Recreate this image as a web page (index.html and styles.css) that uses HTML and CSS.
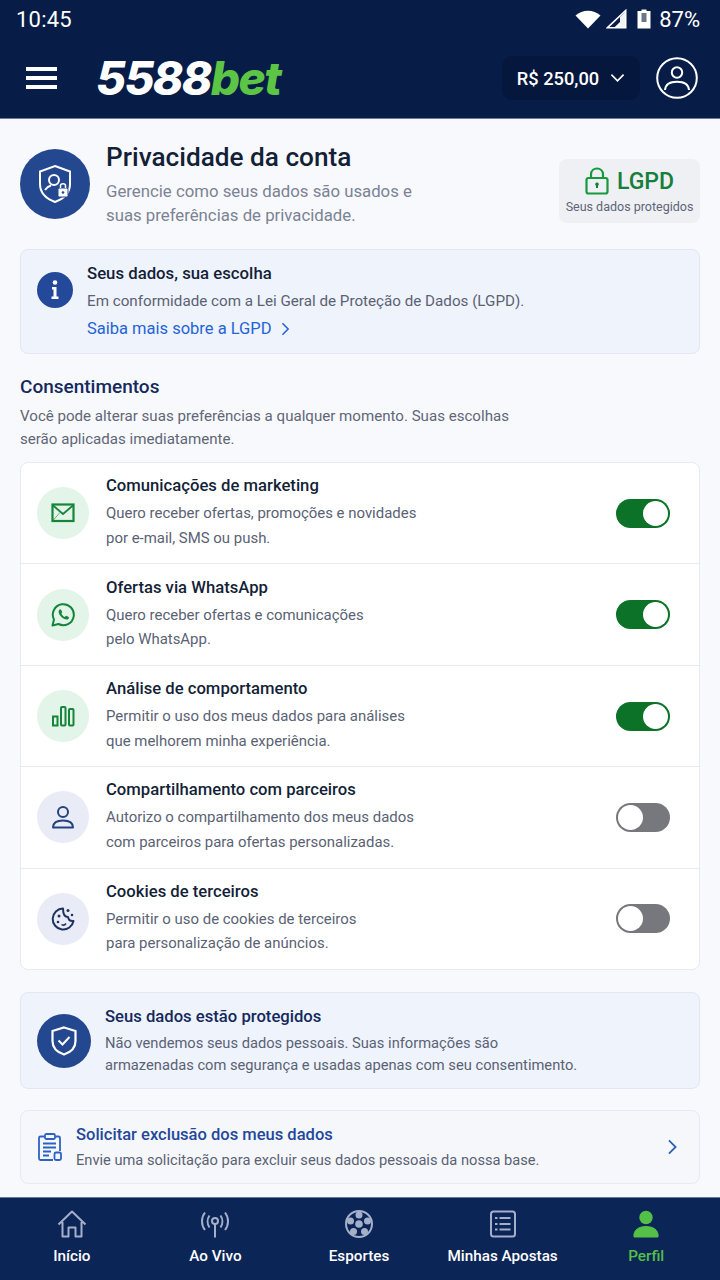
FILE: index.html
```html
<!DOCTYPE html>
<html lang="pt-BR">
<head>
<meta charset="utf-8">
<title>Privacidade da conta</title>
<link rel="stylesheet" href="styles.css">
</head>
<body>
<div class="app">
  <header class="topbar">
    <div class="status">
      <span class="time">10:45</span>
      <div class="status-right">
        <svg class="s-wifi" viewBox="0 0 26 20" width="26" height="20"><path d="M0.5 6.5C7.5 0.2 18.5 0.2 25.5 6.5L13 19.5Z" fill="#fff"/></svg>
        <svg class="s-signal" viewBox="0 0 21 20" width="21" height="20"><path d="M1.5 18.7L19.7 1.5V18.7Z" fill="none" stroke="#fff" stroke-width="1.6"/><path d="M8 18.7L14 13V18.7Z" fill="#fff"/><path d="M14 8V18.7H19.7V2.5Z" fill="#fff" opacity=".95"/></svg>
        <svg class="s-batt" viewBox="0 0 14 20" width="14" height="20"><path d="M4.5 0.5H9.5V2H13.5V19.5H0.5V2H4.5Z" fill="#fff"/><rect x="4.5" y="4" width="5" height="9" fill="#6d7689"/></svg>
        <span class="pct">87%</span>
      </div>
    </div>
    <div class="navrow">
      <div class="burger"><i></i><i></i><i></i></div>
      <div class="logo">5588<em>bet</em></div>
      <div class="balance">R$ 250,00
        <svg viewBox="0 0 16 10" width="15" height="10"><path d="M1.5 1.5L8 8L14.5 1.5" fill="none" stroke="#fff" stroke-width="1.8"/></svg>
      </div>
      <svg class="avatar" viewBox="0 0 42 42" width="42" height="42"><circle cx="21" cy="21" r="19.8" fill="none" stroke="#fff" stroke-width="2"/><circle cx="21" cy="15.5" r="5.2" fill="none" stroke="#fff" stroke-width="2"/><path d="M9 33C9.5 27 14 24.8 21 24.8S32.5 27 33 33" fill="none" stroke="#fff" stroke-width="2"/></svg>
    </div>
  </header>

  <main class="content">
    <section class="hero">
      <div class="hero-icon">
        <svg viewBox="0 0 36 40" width="36" height="40"><path d="M18 2L33 7.5V20C33 29 26 35 18 38C10 35 3 29 3 20V7.5Z" fill="none" stroke="#fff" stroke-width="2"/><circle cx="17" cy="16" r="5" fill="none" stroke="#fff" stroke-width="2"/><path d="M8 26C10 23 12 22 14 21.5" fill="none" stroke="#fff" stroke-width="2"/><rect x="21" y="24" width="10" height="9" rx="1.5" fill="#fff" stroke="#24488f" stroke-width="1"/><path d="M23.5 24V21.5C23.5 19 28.500 19 28.500 21.500V24" fill="none" stroke="#fff" stroke-width="1.500"/><circle cx="26" cy="28.500" r="1.300" fill="#24488f"/></svg>
      </div>
      <div class="hero-text">
        <h1>Privacidade da conta</h1>
        <p>Gerencie como seus dados são usados e<br>suas preferências de privacidade.</p>
      </div>
      <div class="lgpd">
        <div class="lgpd-top">
          <svg viewBox="0 0 24 28" width="24" height="28"><rect x="1.500" y="11" width="21" height="15.500" rx="2" fill="none" stroke="#16993f" stroke-width="2.200"/><path d="M6 11V7.500C6 -0.500 18 -0.500 18 7.500V11" fill="none" stroke="#16993f" stroke-width="2.200"/><path d="M12 15.500a1.800 1.800 0 0 1 1 3.300V21H11V18.800A1.800 1.800 0 0 1 12 15.500Z" fill="#16803a"/></svg>
          <span>LGPD</span>
        </div>
        <small>Seus dados protegidos</small>
      </div>
    </section>

    <section class="info">
      <div class="info-icon"><svg viewBox="0 0 36 36" width="36" height="36"><circle cx="18" cy="18" r="18" fill="#24499b"/><circle cx="18" cy="10.500" r="2.300" fill="#fff"/><path d="M15 15H19.500V24.500H21.500V27H14.500V24.500H16.500V17.500H15Z" fill="#fff"/></svg></div>
      <div>
        <h3>Seus dados, sua escolha</h3>
        <p>Em conformidade com a Lei Geral de Proteção de Dados (LGPD).</p>
        <a class="link">Saiba mais sobre a LGPD
          <svg viewBox="0 0 10 16" width="9" height="14"><path d="M1.500 1.500L8 8L1.500 14.500" fill="none" stroke="#2563d6" stroke-width="1.800"/></svg>
        </a>
      </div>
    </section>

    <section class="consents-head">
      <h2>Consentimentos</h2>
      <p>Você pode alterar suas preferências a qualquer momento. Suas escolhas<br>serão aplicadas imediatamente.</p>
    </section>

    <section class="list">
      <div class="row">
        <div class="ic green"><svg viewBox="0 0 24 20" width="24" height="20"><rect x="1.500" y="1.500" width="21" height="16.500" fill="none" stroke="#14853a" stroke-width="2.200"/><path d="M1.500 2L12 11L22.500 2" fill="none" stroke="#14853a" stroke-width="1.800"/><path d="M1.500 18L9 9.500" fill="none" stroke="#14853a" stroke-width="1" opacity=".6"/></svg></div>
        <div class="txt"><h4>Comunicações de marketing</h4><p>Quero receber ofertas, promoções e novidades<br>por e-mail, SMS ou push.</p></div>
        <div class="tog on"><b></b></div>
      </div>
      <div class="row">
        <div class="ic green"><svg viewBox="0 0 24 24" width="24" height="24"><path d="M1.500 22.500L3 16.500A10.500 10.500 0 1 1 7.500 21Z" fill="none" stroke="#14853a" stroke-width="2" stroke-linejoin="round"/><path d="M8.500 6.500C7 8 7.500 10.500 9.500 13C11.500 15.500 14.500 17 16.500 16.500C17.800 16 18 15 17.800 14L15 12.700L13.800 14C12.500 13.500 11 12 10.300 10.500L11.300 9.300L10 6.500Z" fill="#14853a"/></svg></div>
        <div class="txt"><h4>Ofertas via WhatsApp</h4><p>Quero receber ofertas e comunicações<br>pelo WhatsApp.</p></div>
        <div class="tog on"><b></b></div>
      </div>
      <div class="row">
        <div class="ic green"><svg viewBox="0 0 24 22" width="24" height="22"><rect x="2" y="11.500" width="4.500" height="9" fill="none" stroke="#14853a" stroke-width="2"/><rect x="10" y="2" width="4.500" height="18.500" rx="1" fill="none" stroke="#14853a" stroke-width="2"/><rect x="18" y="4" width="4.500" height="16.500" rx="1" fill="none" stroke="#14853a" stroke-width="2"/></svg></div>
        <div class="txt"><h4>Análise de comportamento</h4><p>Permitir o uso dos meus dados para análises<br>que melhorem minha experiência.</p></div>
        <div class="tog on"><b></b></div>
      </div>
      <div class="row">
        <div class="ic blue"><svg viewBox="0 0 24 24" width="24" height="24"><circle cx="12" cy="7" r="5" fill="none" stroke="#24427f" stroke-width="2"/><path d="M2 22.500C2 17.500 6 15.500 12 15.500S22 17.500 22 22.500Z" fill="none" stroke="#24427f" stroke-width="2" stroke-linejoin="round"/></svg></div>
        <div class="txt"><h4>Compartilhamento com parceiros</h4><p>Autorizo o compartilhamento dos meus dados<br>com parceiros para ofertas personalizadas.</p></div>
        <div class="tog"><b></b></div>
      </div>
      <div class="row">
        <div class="ic blue"><svg viewBox="0 0 24 24" width="24" height="24"><path d="M12 1.500A10.500 10.500 0 1 0 22.500 14C19.500 14.500 17.500 12.500 17 10C14 10 12 7.500 12 1.500Z" fill="none" stroke="#1f3360" stroke-width="2" stroke-linejoin="round"/><circle cx="8" cy="9" r="1.500" fill="#1f3360"/><circle cx="7" cy="15" r="1.300" fill="#1f3360"/><path d="M10.500 17.500C12 18.500 14 18 15 16.500" fill="none" stroke="#1f3360" stroke-width="1.500"/><circle cx="17" cy="3.500" r="1.500" fill="#1f3360"/><circle cx="21" cy="8" r="1.300" fill="#1f3360"/></svg></div>
        <div class="txt"><h4>Cookies de terceiros</h4><p>Permitir o uso de cookies de terceiros<br>para personalização de anúncios.</p></div>
        <div class="tog"><b></b></div>
      </div>
    </section>

    <section class="protect">
      <div class="protect-icon"><svg viewBox="0 0 26 30" width="26" height="30"><path d="M13 1.500L24.500 5V15C24.500 22 19 26.500 13 28.500C7 26.500 1.500 22 1.500 15V5Z" fill="none" stroke="#fff" stroke-width="2.200"/><path d="M7.500 14.500L11.500 18.500L18.500 11" fill="none" stroke="#fff" stroke-width="2"/></svg></div>
      <div class="protect-text">
        <h3>Seus dados estão protegidos</h3>
        <p>Não vendemos seus dados pessoais. Suas informações são<br>armazenadas com segurança e usadas apenas com seu consentimento.</p>
      </div>
    </section>

    <section class="delete">
      <svg class="del-ic" viewBox="0 0 24 28" width="24" height="28"><path d="M6.500 3.500H2.500A1.500 1.500 0 0 0 1 5V25.500A1.500 1.500 0 0 0 2.500 27H15M17.500 3.500H20.500A1.500 1.500 0 0 1 22 5V18" fill="none" stroke="#2d62c4" stroke-width="1.800"/><rect x="7" y="1" width="10" height="5" rx="1.500" fill="none" stroke="#2d62c4" stroke-width="1.800"/><path d="M5 10.500H18M5 14.500H18M5 18.500H13M5 22.500H11" stroke="#2d62c4" stroke-width="1.800"/><rect x="16.500" y="19.500" width="6.500" height="7.500" rx="1.500" fill="#f6f7fb" stroke="#2d62c4" stroke-width="1.800"/></svg>
      <div class="del-text">
        <h3>Solicitar exclusão dos meus dados</h3>
        <p>Envie uma solicitação para excluir seus dados pessoais da nossa base.</p>
      </div>
      <svg class="del-chev" viewBox="0 0 12 18" width="11" height="16"><path d="M2 1.500L9.500 9L2 16.500" fill="none" stroke="#2f5fb5" stroke-width="2"/></svg>
    </section>
  </main>

  <nav class="tabs">
    <div class="tab">
      <svg viewBox="0 0 30 28" width="30" height="28"><path d="M1.500 14.500L15 1.500L28.500 14.500M5.500 12V26.500H11.500V17.500H18.500V26.500H24.500V12" fill="none" stroke="#a4b0c9" stroke-width="2" stroke-linejoin="round"/></svg>
      <span>Início</span>
    </div>
    <div class="tab">
      <svg viewBox="0 0 30 28" width="30" height="28"><g fill="none" stroke="#a4b0c9" stroke-width="2"><circle cx="15" cy="11" r="3"/><path d="M15 14V27.500"/><path d="M9.500 5.500C7 9 7 14 9.500 17.500M20.500 5.500C23 9 23 14 20.500 17.500M5 2.500C1 7.500 1 15 5 20M25 2.500C29 7.500 29 15 25 20"/></g></svg>
      <span>Ao Vivo</span>
    </div>
    <div class="tab">
      <svg viewBox="0 0 28 28" width="28" height="28"><circle cx="14" cy="14" r="13" fill="none" stroke="#a4b0c9" stroke-width="2"/><g fill="#a4b0c9"><circle cx="14" cy="14" r="3.800"/><circle cx="14" cy="5" r="3.500"/><circle cx="22.500" cy="11" r="3.500"/><circle cx="19.500" cy="21.500" r="3.500"/><circle cx="8.500" cy="21.500" r="3.500"/><circle cx="5.500" cy="11" r="3.500"/></g></svg>
      <span>Esportes</span>
    </div>
    <div class="tab">
      <svg viewBox="0 0 26 28" width="26" height="28"><rect x="1" y="1.500" width="24" height="25" rx="2.500" fill="none" stroke="#a4b0c9" stroke-width="2"/><path d="M9.500 8H20.500M9.500 14H20.500M9.500 19.500H20.500" stroke="#a4b0c9" stroke-width="2"/><path d="M5 8H7.500M5 14H7.500M5 19.500H7.500" stroke="#a4b0c9" stroke-width="2"/></svg>
      <span>Minhas Apostas</span>
    </div>
    <div class="tab active">
      <svg viewBox="0 0 26 28" width="26" height="28"><circle cx="13" cy="7.500" r="6.700" fill="#54c047"/><path d="M1 27C0 20 6 16.500 13 16.500S26 20 25 27Z" fill="#54c047" stroke="#54c047" stroke-linejoin="round"/></svg>
      <span>Perfil</span>
    </div>
  </nav>
</div>
</body>
</html>
```

FILE: styles.css
```css
* { box-sizing: border-box; }
html, body { margin: 0; padding: 0; }
body { font-family: Roboto, "Noto Sans", sans-serif; background: #f8f9fc; }
h1, h2, h3, h4, p { margin: 0; }
.app { width: 720px; height: 1280px; display: flex; flex-direction: column; overflow: hidden; }

.topbar { height: 119px; background: #071d47; border-bottom: 1px solid #6b7a96; color: #fff; flex: none; }
.status { height: 38px; padding: 0 20px 0 16px; display: flex; align-items: center; justify-content: space-between; }
.time { font-size: 22px; letter-spacing: 0.2px; }
.status-right { display: flex; align-items: center; gap: 5px; }
.s-batt { margin: 0 3px 0 5px; }
.pct { font-size: 22px; }
.navrow { height: 80px; display: flex; align-items: center; padding: 0 22px 0 26px; }
.burger { width: 31px; display: flex; flex-direction: column; gap: 5px; }
.burger i { display: block; height: 4px; background: #fff; }
.logo { margin-left: 39px; font-family: Inter, Roboto, sans-serif; font-weight: 800; font-style: italic; font-size: 46px; letter-spacing: -1.6px; line-height: 50px; color: #fff; }
.logo em { color: #5cc545; font-style: italic; }
.balance { margin-left: auto; width: 138px; height: 44px; border-radius: 10px; background: #05173c; display: flex; align-items: center; justify-content: center; gap: 11px; font-size: 18.300px; font-weight: 500; }
.avatar { margin-left: 16px; }

.content { flex: 1; padding: 30px 20px 0; display: flex; flex-direction: column; min-height: 0; }
.hero { display: flex; align-items: flex-start; height: 100px; }
.hero-icon { width: 70px; height: 70px; border-radius: 50%; background: #24488f; display: flex; align-items: center; justify-content: center; flex: none; }
.hero-text { margin-left: 16px; flex: 1; margin-top: -8px; }
h1 { font-size: 26.200px; font-weight: 500; line-height: 32px; color: #141f38; }
.hero-text p { font-size: 16.770px; line-height: 24px; color: #7b8394; margin-top: 6px; }
.lgpd { width: 141px; height: 64px; margin-top: 10px; border-radius: 8px; background: #eff0f4; display: flex; flex-direction: column; align-items: center; padding-top: 8px; }
.lgpd-top { display: flex; align-items: center; gap: 8px; height: 28px; color: #16803a; font-size: 23px; font-weight: 500; }
.lgpd small { font-size: 12.500px; color: #5d6577; line-height: 16px; margin-top: 4px; }

.info { height: 105px; background: #eff3fc; border: 1px solid #e2e7f3; border-radius: 8px; display: flex; padding: 13px 16px; gap: 14px; }
.info-icon { margin-top: 9px; height: 36px; }
.info h3 { font-size: 16.750px; font-weight: 500; line-height: 20px; color: #141f38; }
.info p { font-size: 15.200px; line-height: 20px; margin-top: 8px; color: #5a6274; }
.link { display: flex; align-items: center; gap: 9px; font-size: 16.500px; color: #2563d6; line-height: 20px; margin-top: 8px; }

.consents-head { margin-top: 21px; }
h2 { font-size: 19px; font-weight: 500; color: #14295c; line-height: 24px; }
.consents-head p { font-size: 15.100px; line-height: 23px; color: #5f6678; margin-top: 6px; }

.list { margin-top: 11px; background: #fff; border: 1px solid #e8eaf2; border-radius: 8px; flex: none; height: 508px; display: flex; flex-direction: column; }
.row { flex: 1; display: flex; align-items: center; padding: 0 29px 0 16px; border-bottom: 1px solid #e8eaf2; }
.row:last-child { border-bottom: 0; }
.ic { width: 52px; height: 52px; border-radius: 50%; display: flex; align-items: center; justify-content: center; flex: none; }
.ic.green { background: #e3f4e8; }
.ic.blue { background: #e9ecf7; }
.txt { flex: 1; margin-left: 17px; padding-top: 1px; }
.txt h4 { font-size: 16.670px; font-weight: 500; line-height: 20px; margin-top: -1px; color: #141f38; }
.txt p { font-size: 14.950px; line-height: 24.500px; color: #5a6274; margin-top: 5px; }
.tog { width: 54px; height: 29px; border-radius: 15px; background: #77787e; padding: 2px; display: flex; }
.tog b { display: block; width: 25px; height: 25px; border-radius: 50%; background: #fff; }
.tog.on { background: #0b7227; justify-content: flex-end; }

.protect { margin-top: 22px; height: 97px; background: #eff3fc; border: 1px solid #e2e7f3; border-radius: 8px; display: flex; align-items: center; padding: 0 16px; gap: 14px; }
.protect-icon { width: 54px; height: 54px; border-radius: 50%; background: #24488f; display: flex; align-items: center; justify-content: center; flex: none; }
.protect-text { padding-top: 2px; }
.protect h3 { font-size: 16.650px; font-weight: 500; line-height: 20px; color: #14295c; }
.protect p { font-size: 14.700px; line-height: 22px; color: #5a6274; margin-top: 5px; }

.delete { margin-top: 21px; height: 74px; background: #f6f7fb; border: 1px solid #e8eaf2; border-radius: 8px; display: flex; align-items: center; padding: 0 21px 0 17px; }
.del-text { flex: 1; margin-left: 14px; }
.del-text h3 { font-size: 16.550px; font-weight: 500; line-height: 20px; color: #24489b; }
.del-text p { font-size: 14.650px; line-height: 20px; color: #5a6274; margin-top: 5px; }

.tabs { height: 83px; flex: none; background: #0c2557; border-top: 1px solid #6b7a96; display: grid; grid-template-columns: repeat(5, 1fr); padding-right: 2px; }
.tab { display: flex; flex-direction: column; align-items: center; padding-top: 12px; color: #fff; font-size: 15.250px; font-weight: 500; }
.tab svg { height: 28px; flex: none; }
.tab span { margin-top: 9px; line-height: 18px; }
.tab.active { color: #54c047; }
```
